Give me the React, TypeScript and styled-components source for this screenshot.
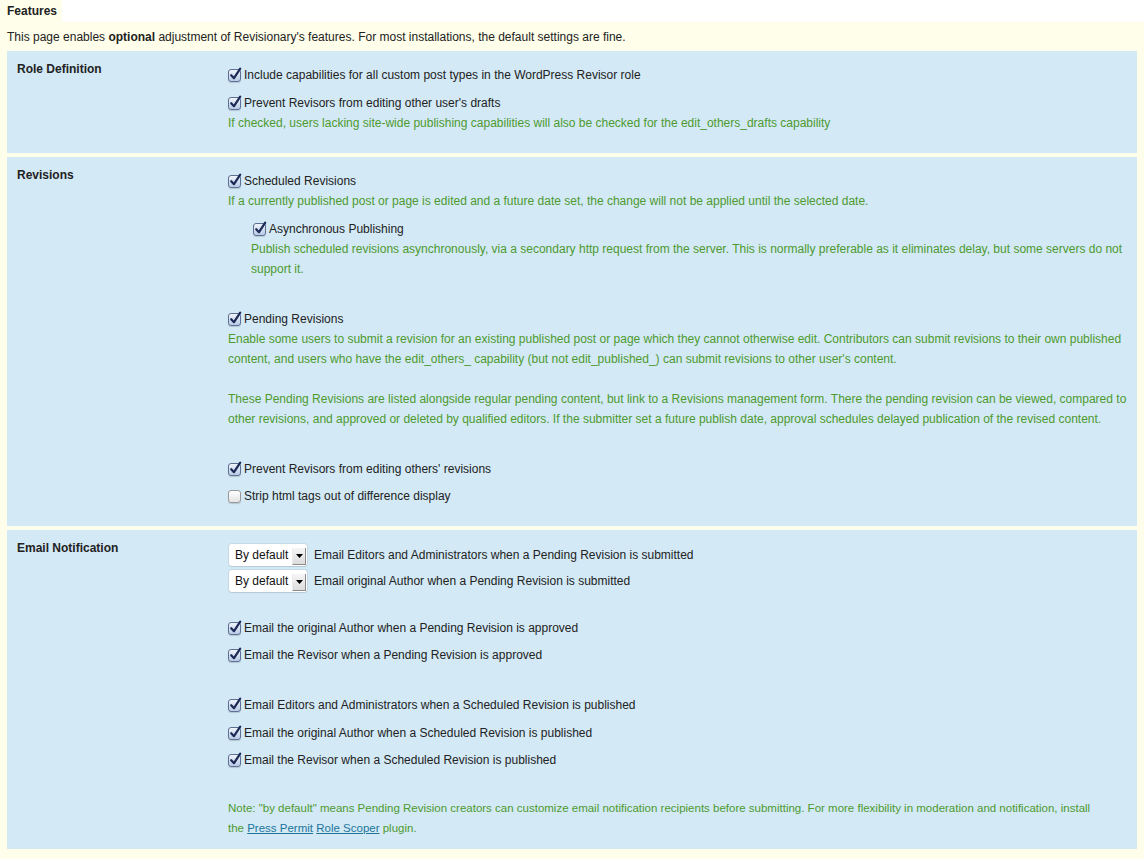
import React from "react";
import styled, { createGlobalStyle } from "styled-components";

const Global = createGlobalStyle`
  html, body { margin: 0; padding: 0; background: #fffeea; }
  body { font-family: "Liberation Sans", Arial, Helvetica, sans-serif; font-size: 12px; color: #222; }
`;

const Page = styled.div`
  background: #fff;
  min-height: 859px;
  display: flex;
  flex-direction: column;
`;

const Tab = styled.div`
  align-self: flex-start;
  background: #fffeea;
  font-weight: bold;
  line-height: 21px;
  height: 21px;
  padding: 1px 7px 0 7px;
  width: 48px;
`;

const Body = styled.div`
  background: #fffeea;
  flex: 1;
  padding: 5px 7px 10px 7px;
  display: flex;
  flex-direction: column;
  gap: 4px;
`;

const Intro = styled.div`
  line-height: 20px;
`;

const Section = styled.section`
  background: #d3e9f6;
  display: grid;
  grid-template-columns: 221px 1fr;
`;

const SectionTitle = styled.div`
  font-weight: bold;
  line-height: 20px;
  padding: 8px 10px 6px 10px;
`;

const SectionBody = styled.div<{ $pt: number; $pb: number }>`
  padding: ${(p) => p.$pt}px 10px ${(p) => p.$pb}px 0;
`;

const CheckRow = styled.label<{ $mt?: number; $indent?: number }>`
  display: flex;
  align-items: center;
  line-height: 20px;
  height: 20px;
  margin-top: ${(p) => p.$mt ?? 0}px;
  margin-left: ${(p) => p.$indent ?? 0}px;
  color: #222;
`;

const Desc = styled.div<{ $mt?: number; $indent?: number }>`
  color: #4e9a2f;
  line-height: 20px;
  margin-top: ${(p) => p.$mt ?? 0}px;
  margin-left: ${(p) => p.$indent ?? 0}px;
`;

const Note = styled(Desc)`
  font-size: 11.5px;
`;

const Box = styled.span<{ $checked: boolean }>`
  position: relative;
  flex: none;
  width: 11px;
  height: 11px;
  margin-right: 3px;
  border: 1px solid ${(p) => (p.$checked ? "#5f6f93" : "#9a9a9a")};
  border-radius: 3px;
  background: ${(p) =>
    p.$checked
      ? "linear-gradient(#eef4fb, #b9cbe6)"
      : "linear-gradient(#ffffff, #e4e4e4)"};
  box-shadow: 0 1px 1px rgba(0, 0, 0, 0.15);
  svg {
    position: absolute;
    left: 0px;
    top: -3px;
  }
`;

const SelectRow = styled.div<{ $mt?: number }>`
  display: flex;
  align-items: center;
  gap: 7px;
  margin-top: ${(p) => p.$mt ?? 0}px;
`;

const Select = styled.div`
  display: flex;
  align-items: center;
  justify-content: space-between;
  width: 78px;
  height: 22px;
  box-sizing: border-box;
  background: #fff;
  border-radius: 3px;
  box-shadow: 0 0 0 1px rgba(0, 0, 0, 0.06), 0 1px 1px rgba(0, 0, 0, 0.08);
  padding: 0 1px 0 6px;
  color: #111;
  margin-left: 1px;
`;

const SelectButton = styled.span`
  width: 14px;
  height: 17px;
  margin-top: 3px;
  box-sizing: border-box;
  background: linear-gradient(#f6f6f6, #dcdcdc);
  border-right: 1px solid #8a8a8a;
  border-bottom: 1px solid #8a8a8a;
  border-left: 1px solid #ececec;
  display: flex;
  align-items: center;
  justify-content: center;
`;

const Link = styled.a`
  color: #21759b;
  text-decoration: underline;
`;

const Check: React.FC<{ checked?: boolean }> = ({ checked = true }) => (
  <Box $checked={checked}>
    {checked && (
      <svg width="13" height="14" viewBox="0 0 13 14">
        <path
          d="M2.2 8.2 L5 11.2 L11.2 1.6"
          fill="none"
          stroke="#1c2a55"
          strokeWidth="2.2"
          strokeLinecap="round"
          strokeLinejoin="round"
        />
      </svg>
    )}
  </Box>
);

const Dropdown: React.FC = () => (
  <Select>
    <span>By default</span>
    <SelectButton>
      <svg width="7" height="4" viewBox="0 0 7 4">
        <path d="M0 0 H7 L3.5 4 Z" fill="#000" />
      </svg>
    </SelectButton>
  </Select>
);

export default function App() {
  return (
    <>
      <Global />
      <Page>
        <Tab>Features</Tab>
        <Body>
          <Intro>
            This page enables <b>optional</b> adjustment of Revisionary's features. For most
            installations, the default settings are fine.
          </Intro>

          <Section>
            <SectionTitle>Role Definition</SectionTitle>
            <SectionBody $pt={14} $pb={20}>
              <CheckRow>
                <Check />
                Include capabilities for all custom post types in the WordPress Revisor role
              </CheckRow>
              <CheckRow $mt={8}>
                <Check />
                Prevent Revisors from editing other user's drafts
              </CheckRow>
              <Desc>
                If checked, users lacking site-wide publishing capabilities will also be checked
                for the edit_others_drafts capability
              </Desc>
            </SectionBody>
          </Section>

          <Section>
            <SectionTitle>Revisions</SectionTitle>
            <SectionBody $pt={14} $pb={20}>
              <CheckRow>
                <Check />
                Scheduled Revisions
              </CheckRow>
              <Desc>
                If a currently published post or page is edited and a future date set, the change
                will not be applied until the selected date.
              </Desc>
              <CheckRow $mt={8} $indent={25}>
                <Check />
                Asynchronous Publishing
              </CheckRow>
              <Desc $indent={23}>
                Publish scheduled revisions asynchronously, via a secondary http request from the
                server. This is normally preferable as it eliminates delay, but some servers do not
                support it.
              </Desc>
              <CheckRow $mt={30}>
                <Check />
                Pending Revisions
              </CheckRow>
              <Desc>
                Enable some users to submit a revision for an existing published post or page which
                they cannot otherwise edit. Contributors can submit revisions to their own published
                content, and users who have the edit_others_ capability (but not edit_published_)
                can submit revisions to other user's content.
              </Desc>
              <Desc $mt={20}>
                These Pending Revisions are listed alongside regular pending content, but link to a
                Revisions management form. There the pending revision can be viewed, compared to
                other revisions, and approved or deleted by qualified editors. If the submitter set
                a future publish date, approval schedules delayed publication of the revised
                content.
              </Desc>
              <CheckRow $mt={30}>
                <Check />
                Prevent Revisors from editing others' revisions
              </CheckRow>
              <CheckRow $mt={7}>
                <Check checked={false} />
                Strip html tags out of difference display
              </CheckRow>
            </SectionBody>
          </Section>

          <Section>
            <SectionTitle>Email Notification</SectionTitle>
            <SectionBody $pt={14} $pb={11}>
              <SelectRow>
                <Dropdown />
                Email Editors and Administrators when a Pending Revision is submitted
              </SelectRow>
              <SelectRow $mt={4}>
                <Dropdown />
                Email original Author when a Pending Revision is submitted
              </SelectRow>
              <CheckRow $mt={26}>
                <Check />
                Email the original Author when a Pending Revision is approved
              </CheckRow>
              <CheckRow $mt={7}>
                <Check />
                Email the Revisor when a Pending Revision is approved
              </CheckRow>
              <CheckRow $mt={30}>
                <Check />
                Email Editors and Administrators when a Scheduled Revision is published
              </CheckRow>
              <CheckRow $mt={8}>
                <Check />
                Email the original Author when a Scheduled Revision is published
              </CheckRow>
              <CheckRow $mt={7}>
                <Check />
                Email the Revisor when a Scheduled Revision is published
              </CheckRow>
              <Note $mt={28}>
                Note: "by default" means Pending Revision creators can customize email notification
                recipients before submitting. For more flexibility in moderation and notification,
                install
                <br />
                the <Link href="#">Press Permit</Link> <Link href="#">Role Scoper</Link> plugin.
              </Note>
            </SectionBody>
          </Section>
        </Body>
      </Page>
    </>
  );
}
